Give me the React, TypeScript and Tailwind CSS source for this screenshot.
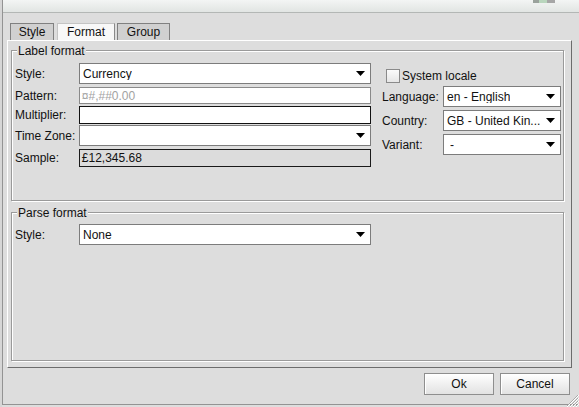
import React from 'react';

const FONT = "font-['Liberation_Sans',Arial,sans-serif]";

function Arrow() {
  return (
    <svg width="9" height="5" viewBox="0 0 9 5" className="shrink-0">
      <path d="M0 0H9L4.5 5Z" fill="#000" />
    </svg>
  );
}

function Combo({ value, className = '' }: { value: string; className?: string }) {
  return (
    <div className={`flex h-[21px] items-center justify-between border border-[#7c7c7c] bg-white pl-[3px] pr-[5px] ${className}`}>
      <span className="truncate leading-none">{value}</span>
      <Arrow />
    </div>
  );
}

function Field({ value, className = '' }: { value?: string; className?: string }) {
  return (
    <div className={`flex items-center border pl-[2px] leading-none ${className}`}>
      {value}
    </div>
  );
}

function Group({ title, className = '', children }: { title: string; className?: string; children?: React.ReactNode }) {
  return (
    <div className={`relative ml-[3px] w-[553px] border border-[#9a9a9a] shadow-[1px_1px_0_#fff,inset_1px_1px_0_#fff] ${className}`}>
      <span className="absolute left-[5px] top-[-7px] bg-[#dddddd] px-[1px] leading-[14px]">{title}</span>
      {children}
    </div>
  );
}

function Tab({ label, active, className = '' }: { label: string; active?: boolean; className?: string }) {
  return (
    <div
      className={`flex h-[17px] items-center justify-center border border-b-0 leading-none ${
        active
          ? 'border-t-[#c4c4c4] border-l-[#c4c4c4] border-r-[#8a8a8a] bg-[#f8f8f8]'
          : 'border-[#808080] bg-[#d0d0d0]'
      } ${className}`}
    >
      {label}
    </div>
  );
}

function Button({ label }: { label: string }) {
  return (
    <div className="flex h-[22px] w-[70px] items-center justify-center border border-[#8e8e8e] bg-gradient-to-b from-[#ffffff] to-[#e2e2e2] leading-none shadow-[inset_1px_1px_0_#fff]">
      {label}
    </div>
  );
}

export default function App() {
  return (
    <div className={`flex h-[407px] w-[579px] overflow-hidden bg-[#dddddd] text-[12px] text-[#111] ${FONT}`}>
      {/* window behind */}
      <div className="w-[2px] bg-[#d6d6d6]" />

      <div className="relative flex h-[405px] flex-1 flex-col border-b border-l border-[#939393]">
        {/* title strip */}
        <div className="relative h-[13px] border-b border-[#b3b7b5] bg-gradient-to-b from-[#f3f5f4] to-[#e1e5e3]">
          <div className="absolute left-[530px] top-0 flex h-[3px] w-[22px]">
            <div className="w-[6px] bg-[#9aa29c]" />
            <div className="w-[8px] bg-[#b9d6bd]" />
            <div className="w-[8px] bg-[#a6a6a6]" />
          </div>
        </div>

        {/* tabs */}
        <div className="mt-[10px] flex pl-[7px]">
          <Tab label="Style" className="w-[44px]" />
          <Tab label="Format" active className="ml-[3px] w-[58px]" />
          <Tab label="Group" className="ml-[2px] w-[53px]" />
        </div>

        {/* tab panel */}
        <div className="ml-[4px] h-[328px] w-[565px] border border-b-[#6c6c6c] border-l-white border-r-[#6c6c6c] border-t-white">
          <Group title="Label format" className="mt-[9px] h-[151px]">
            <div className="flex pl-[3px] pt-[12px]">
              <div className="flex w-[356px] flex-col">
                <div className="flex h-[21px] items-center">
                  <span className="w-[64px]">Style:</span>
                  <Combo value="Currency" className="w-[292px]" />
                </div>
                <div className="mt-[3px] flex h-[17px] items-center">
                  <span className="w-[64px]">Pattern:</span>
                  <Field value="¤#,##0.00" className="h-full w-[293px] border-[#8a8a8a] bg-white text-[#a2a2a2]" />
                </div>
                <div className="mt-[2px] flex h-[18px] items-center">
                  <span className="w-[64px]">Multiplier:</span>
                  <Field className="h-full w-[293px] border-[#111] bg-white" />
                </div>
                <div className="mt-[1px] flex h-[21px] items-center">
                  <span className="w-[64px]">Time Zone:</span>
                  <Combo value="" className="w-[292px]" />
                </div>
                <div className="mt-[3px] flex h-[18px] items-center">
                  <span className="w-[64px]">Sample:</span>
                  <Field value="£12,345.68" className="h-full w-[293px] border-[#1a1a1a] bg-[#dcdcdc]" />
                </div>
              </div>

              <div className="ml-[11px] flex w-[179px] flex-col">
                <div className="mt-[5px] flex h-[15px] items-center gap-[2px] pl-[4px]">
                  <div className="h-[14px] w-[14px] border border-[#8a8a8a] bg-gradient-to-b from-[#fbfbfb] to-[#e6e6e6]" />
                  <span className="leading-none">System locale</span>
                </div>
                <div className="mt-[3px] flex h-[21px] items-center">
                  <span className="w-[61px]">Language:</span>
                  <Combo value="en - English" className="w-[118px]" />
                </div>
                <div className="mt-[3px] flex h-[21px] items-center">
                  <span className="w-[61px]">Country:</span>
                  <Combo value="GB - United Kin..." className="w-[118px]" />
                </div>
                <div className="mt-[3px] flex h-[21px] items-center">
                  <span className="w-[61px]">Variant:</span>
                  <Combo value=" -" className="w-[118px] pl-[6px]" />
                </div>
              </div>
            </div>
          </Group>

          <Group title="Parse format" className="mt-[11px] h-[149px]">
            <div className="flex h-[21px] items-center pl-[3px] mt-[11px]">
              <span className="w-[64px]">Style:</span>
              <Combo value="None" className="w-[292px]" />
            </div>
          </Group>
        </div>

        {/* buttons */}
        <div className="mt-[5px] flex justify-end gap-[6px] pr-[9px]">
          <Button label="Ok" />
          <Button label="Cancel" />
        </div>

        {/* resize grip */}
        <svg width="14" height="14" viewBox="0 0 14 14" className="absolute bottom-[-3px] right-0">
          <path d="M13 2L2 13M13 5L5 13M13 8L8 13M13 11L11 13" stroke="#a8a8a8" strokeWidth="1" />
          <path d="M14 2L2 14M14 5L5 14M14 8L8 14M14 11L11 14" stroke="#ffffff" strokeWidth="1" />
        </svg>
      </div>
    </div>
  );
}
